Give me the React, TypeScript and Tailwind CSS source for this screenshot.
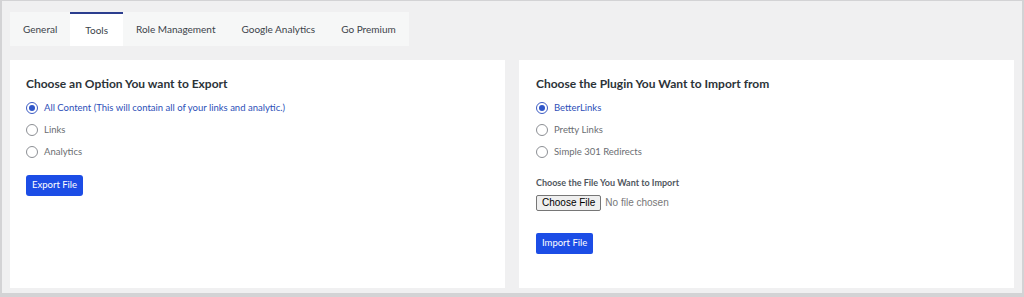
import { useState } from "react"

const tabs = ["General", "Tools", "Role Management", "Google Analytics", "Go Premium"]

function Radio({ label, checked, onClick }: { label: string; checked: boolean; onClick: () => void }) {
    return (
        <label onClick={onClick} className="flex items-center gap-[6px] h-[22px] cursor-pointer">
            <span className={`w-[12px] h-[12px] rounded-full border flex items-center justify-center ${checked ? "border-[#3b5bc4]" : "border-[#8c8f94]"}`}>
                {checked && <span className="w-[6px] h-[6px] rounded-full bg-[#2f56c9]" />}
            </span>
            <span className={`text-[9.5px] ${checked ? "text-[#2c4fb8]" : "text-[#6b6e72]"}`}>{label}</span>
        </label>
    )
}

export default function App() {
    const [exportOpt, setExportOpt] = useState("all")
    const [plugin, setPlugin] = useState("betterlinks")

    const exportOptions = [
        { id: "all", label: "All Content (This will contain all of your links and analytic.)" },
        { id: "links", label: "Links" },
        { id: "analytics", label: "Analytics" },
    ]
    const plugins = [
        { id: "betterlinks", label: "BetterLinks" },
        { id: "pretty", label: "Pretty Links" },
        { id: "simple", label: "Simple 301 Redirects" },
    ]

    return (
        <main className="w-[1024px] h-[297px] border-l-2 border-r-2 border-t border-b-[4px] border-[#d3d3d5] bg-[#f0f0f1] px-[8px] pt-[11px] font-['Lato',sans-serif] text-[#1d2327] overflow-hidden">

            <div className="flex w-fit h-[34px] bg-[#f6f7f7] text-[10px] text-[#3c434a]">
                {tabs.map(t => (
                    <div
                        key={t}
                        className={`flex items-center justify-center ${t === "Tools" ? "bg-white border-t-2 border-[#2c3e8f] px-[15px]" : "px-[13px]"}`}
                    >
                        {t}
                    </div>
                ))}
            </div>

            <div className="grid grid-cols-2 gap-[14px] mt-[14px]">
                <div className="bg-white h-[228px] px-[16px] pt-[14px]">
                    <h2 className="text-[12px] font-bold text-[#2c3338] h-[20px] leading-[20px] mb-[3px]">Choose an Option You want to Export</h2>
                    {exportOptions.map(o => (
                        <Radio key={o.id} label={o.label} checked={exportOpt === o.id} onClick={() => setExportOpt(o.id)} />
                    ))}
                    <button className="mt-[12px] h-[21px] px-[6px] rounded-[3px] bg-[#1c4de6] text-white text-[9.5px]">Export File</button>
                </div>

                <div className="bg-white h-[228px] px-[17px] pt-[14px]">
                    <h2 className="text-[12px] font-bold text-[#2c3338] h-[20px] leading-[20px] mb-[3px]">Choose the Plugin You Want to Import from</h2>
                    {plugins.map(o => (
                        <Radio key={o.id} label={o.label} checked={plugin === o.id} onClick={() => setPlugin(o.id)} />
                    ))}
                    <p className="mt-[13px] text-[9px] font-bold text-[#50575e]">Choose the File You Want to Import</p>
                    <div className="flex items-center gap-[4px] mt-[5px] font-['Liberation_Sans',sans-serif]">
                        <span className="h-[16px] px-[5px] flex items-center border border-[#767676] rounded-[2px] bg-[#efefef] text-[10px] text-black">Choose File</span>
                        <span className="text-[10px] text-[#777]">No file chosen</span>
                    </div>
                    <button className="mt-[22px] h-[21px] px-[6px] rounded-[2px] bg-[#1c4de6] text-white text-[9.5px]">Import File</button>
                </div>
            </div>

        </main>
    )
}
